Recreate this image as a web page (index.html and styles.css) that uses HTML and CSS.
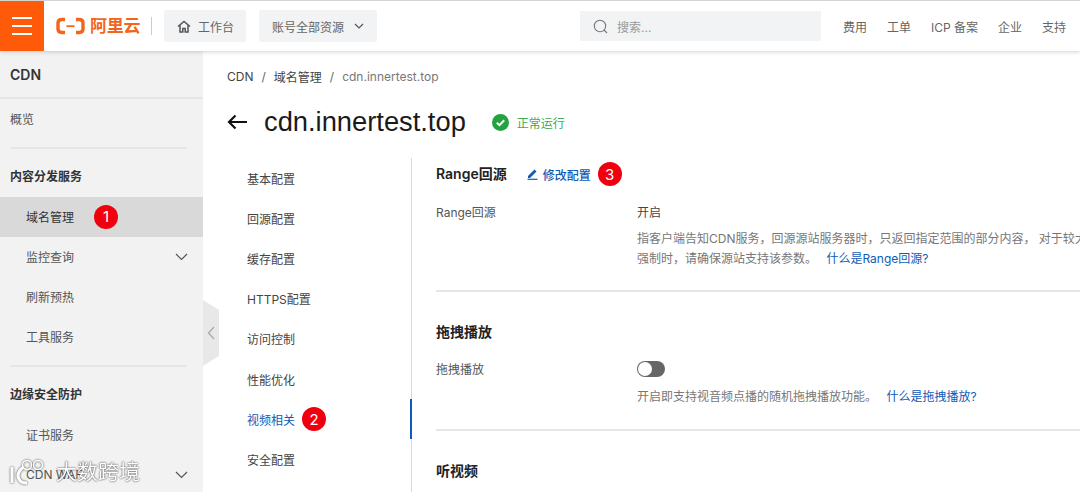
FILE: index.html
```html
<!DOCTYPE html>
<html lang="zh-CN">
<head>
<meta charset="utf-8">
<title>CDN</title>
<link rel="stylesheet" href="styles.css">
</head>
<body>
<div class="app">
  <header class="topbar">
    <button class="burger"><span></span><span></span><span></span></button>
    <div class="logo">
      <svg width="29" height="18" viewBox="0 0 29 18"><path d="M9 2.500H6Q2 2.500 2 6V12Q2 15.500 6 15.500H9M20 2.500H23Q27 2.500 27 6V12Q27 15.500 23 15.500H20" fill="none" stroke="#f4651c" stroke-width="3.400"/><path d="M10.500 9.200H18.500" stroke="#f4651c" stroke-width="1.800"/></svg>
      <span class="logo-text">阿里云</span>
    </div>
    <div class="logo-sep"></div>
    <div class="pill home-pill">
      <svg width="14" height="13" viewBox="0 0 14 13"><path d="M1 6.500L7 1.500L13 6.500M3 5.500V12H5.800V8.500H8.200V12H11V5.500" fill="none" stroke="#555" stroke-width="1.500"/></svg>
      <span>工作台</span>
    </div>
    <div class="pill res-pill">
      <span>账号全部资源</span>
      <svg width="10" height="6" viewBox="0 0 10 6"><path d="M1 1L5 5L9 1" fill="none" stroke="#555" stroke-width="1.200"/></svg>
    </div>
    <div class="search">
      <svg width="15" height="15" viewBox="0 0 15 15"><circle cx="7" cy="7" r="5.700" fill="none" stroke="#777" stroke-width="1.100"/><path d="M11 11L14 14" stroke="#777" stroke-width="1.100"/></svg>
      <span>搜索...</span>
    </div>
    <nav class="topnav">
      <a>费用</a><a>工单</a><a>ICP 备案</a><a>企业</a><a>支持</a>
    </nav>
  </header>

  <div class="body">
    <aside class="sidebar">
      <div class="side-title">CDN</div>
      <div class="side-item top">概览</div>
      <div class="side-rule"></div>
      <div class="side-group">内容分发服务</div>
      <div class="side-sub active">域名管理<i class="badge">1</i></div>
      <div class="side-sub">监控查询<svg class="caret" width="13" height="8" viewBox="0 0 13 8"><path d="M1 1L6.500 6.500L12 1" fill="none" stroke="#555" stroke-width="1.200"/></svg></div>
      <div class="side-sub">刷新预热</div>
      <div class="side-sub">工具服务</div>
      <div class="side-rule second"></div>
      <div class="side-group">边缘安全防护</div>
      <div class="side-sub">证书服务</div>
      <div class="side-sub">CDN WAF<svg class="caret" width="13" height="8" viewBox="0 0 13 8"><path d="M1 1L6.500 6.500L12 1" fill="none" stroke="#555" stroke-width="1.200"/></svg></div>
    </aside>
    <div class="collapse">
      <svg width="8" height="14" viewBox="0 0 8 14"><path d="M7 1L1.500 7L7 13" fill="none" stroke="#aaa" stroke-width="1.300"/></svg>
    </div>

    <main class="main">
      <div class="crumbs"><span>CDN</span><em>/</em><span>域名管理</span><em>/</em><span class="last">cdn.innertest.top</span></div>
      <div class="title-row">
        <svg class="back" width="20" height="16" viewBox="0 0 20 16"><path d="M20 8H2M8.500 1.500L2 8L8.500 14.500" fill="none" stroke="#111" stroke-width="2.200"/></svg>
        <h1>cdn.innertest.top</h1>
        <svg class="ok" width="17" height="17" viewBox="0 0 17 17"><circle cx="8.500" cy="8.500" r="8.500" fill="#23a33f"/><path d="M4.800 8.700L7.500 11.200L12.200 6.200" fill="none" stroke="#fff" stroke-width="2"/></svg>
        <span class="status">正常运行</span>
      </div>
      <div class="columns">
        <nav class="subnav">
          <a>基本配置</a><a>回源配置</a><a>缓存配置</a><a>HTTPS配置</a><a>访问控制</a><a>性能优化</a>
          <a class="current">视频相关<i class="badge">2</i></a>
          <a>安全配置</a>
        </nav>
        <section class="content">
          <div class="block first">
            <div class="block-head">
              <h2>Range回源</h2>
              <a class="edit"><svg width="11" height="12" viewBox="0 0 11 12"><path d="M1 8L7.500 1.500L9.500 3.500L3 10H1Z" fill="#0f5bb5"/><path d="M0.500 11.300H10.500" stroke="#0f5bb5" stroke-width="1.200"/></svg>修改配置</a>
              <i class="badge">3</i>
            </div>
            <div class="row">
              <div class="row-label">Range回源</div>
              <div class="row-value">
                <div>开启</div>
                <p class="desc">指客户端告知CDN服务，回源源站服务器时，只返回指定范围的部分内容， 对于较大文件的分发<br>强制时，请确保源站支持该参数。 <a>什么是Range回源?</a></p>
              </div>
            </div>
          </div>
          <div class="block second">
            <h2>拖拽播放</h2>
            <div class="row drag-row">
              <div class="row-label">拖拽播放</div>
              <div class="row-value">
                <span class="toggle"></span>
                <p class="desc single">开启即支持视音频点播的随机拖拽播放功能。 <a>什么是拖拽播放?</a></p>
              </div>
            </div>
          </div>
          <div class="block third"><h2>听视频</h2></div>
        </section>
      </div>
    </main>
  </div>

  <div class="watermark">
    <svg width="37" height="26" viewBox="0 0 37 26"><path d="M3 8V24M15 8C9 11 8 17 10 20C11 23 14 24 18 24" fill="none" stroke="#fff" stroke-width="3"/><circle cx="18" cy="6" r="4.500" fill="none" stroke="#fff" stroke-width="1.500"/><circle cx="29" cy="6" r="4.500" fill="none" stroke="#fff" stroke-width="1.500"/></svg>
    <span>大数跨境</span>
  </div>
</div>
</body>
</html>
```
FILE: styles.css
```css
* { box-sizing: border-box; }
html, body { margin: 0; padding: 0; }
body {
  width: 1080px;
  height: 492px;
  overflow: hidden;
  background: #fff;
  font-family: Inter, "Noto Sans CJK SC", sans-serif;
  font-size: 12px;
  color: #333;
}
a { color: inherit; text-decoration: none; }
.app { position: relative; width: 1080px; height: 492px; overflow: hidden; }

.topbar {
  position: relative;
  z-index: 3;
  height: 51px;
  display: flex;
  align-items: center;
  background: #fff;
  border-top: 1px solid #d4d4d4;
  box-shadow: 0 1px 4px rgba(0, 0, 0, .18);
}
.burger {
  width: 44px;
  height: 50px;
  flex: none;
  border: 0;
  padding: 0;
  background: #ff5a0a;
  display: flex;
  flex-direction: column;
  justify-content: center;
  align-items: center;
  gap: 6px;
}
.burger span { width: 20px; height: 2px; background: #fff; }
.logo { display: flex; align-items: center; gap: 5px; margin-left: 12px; width: 89px; flex: none; }
.logo-text { color: #f4651c; font-size: 17px; font-weight: 700; line-height: 20px; white-space: nowrap; letter-spacing: -.3px; }
.logo-sep { width: 1px; height: 18px; background: #ccc; margin-left: 6px; flex: none; }
.pill {
  height: 32px;
  flex: none;
  display: flex;
  align-items: center;
  background: #f1f3f4;
  border-radius: 2px;
  color: #666;
  font-size: 12px;
}
.home-pill { width: 82px; margin-left: 12px; padding-left: 13px; gap: 7px; }
.res-pill { width: 118px; margin-left: 13px; padding-left: 13px; gap: 10px; }
.search {
  width: 241px;
  height: 30px;
  flex: none;
  margin-left: 203px;
  display: flex;
  align-items: center;
  gap: 9px;
  padding-left: 13px;
  background: #f1f3f4;
  color: #999;
}
.topnav { display: flex; gap: 20px; margin-left: 22px; color: #666; white-space: nowrap; }

.body { display: flex; height: 441px; position: relative; }
.sidebar { width: 203px; height: 441px; flex: none; background: #f2f2f2; overflow: hidden; color: #555; }
.side-title {
  height: 48px;
  padding-left: 10px;
  line-height: 47px;
  font-size: 14px;
  font-weight: 600;
  color: #333;
  border-bottom: 2px solid #e6e6e6;
}
.side-item { height: 40px; line-height: 41px; padding-left: 10px; }
.side-rule { height: 2px; margin: 8px 10px 0 10px; background: #e6e6e6; width: 177px; }
.side-rule.second { margin-top: 8px; }
.side-group { height: 48px; line-height: 56px; padding-left: 10px; font-weight: 600; color: #333; }
.side-sub {
  height: 40px;
  display: flex;
  align-items: center;
  padding: 0 15px 1px 26px;
}
.side-sub.active { background: #d9d9d9; color: #333; }
.caret { margin-left: auto; }
.badge {
  display: inline-flex;
  align-items: center;
  justify-content: center;
  width: 24px;
  height: 24px;
  flex: none;
  border-radius: 50%;
  background: #f0000e;
  color: #fff;
  font-style: normal;
  font-size: 15px;
}
.side-sub .badge { margin-left: 20px; }
.collapse {
  position: absolute;
  left: 203px;
  top: 249px;
  width: 16px;
  height: 66px;
  background: #e8e8e8;
  clip-path: polygon(0 0, 100% 15%, 100% 85%, 0 100%);
  display: flex;
  align-items: center;
  justify-content: center;
}

.main { flex: 1; min-width: 0; padding-left: 24px; }
.crumbs { height: 48px; display: flex; align-items: center; gap: 8px; padding-top: 2px; color: #444; white-space: nowrap; }
.crumbs em { font-style: normal; color: #666; }
.crumbs .last { color: #777; }
.title-row { height: 46px; display: flex; align-items: center; }
.back { flex: none; }
h1 { margin: 0 0 0 17px; font-family: "Liberation Sans", sans-serif; font-size: 27.300px; line-height: 36px; font-weight: 400; color: #1a1a1a; white-space: nowrap; }
.ok { margin-left: 26px; flex: none; }
.status { margin-left: 8px; color: #3cab52; }
.columns { display: flex; margin-top: 13px; height: 334px; }
.subnav { width: 185px; flex: none; border-right: 1px solid #d9d9d9; display: flex; flex-direction: column; color: #444; }
.subnav a { height: 40.200px; display: flex; align-items: center; padding-left: 20px; position: relative; white-space: nowrap; }
.subnav .current { color: #0f5bb5; }
.subnav .current::after { content: ""; position: absolute; right: -1px; top: 0; width: 2px; height: 40px; background: #0f5bb5; }
.subnav .badge { margin-left: 7px; }
.content { flex: 1; min-width: 0; padding-left: 24px; overflow: hidden; }
h2 { margin: 0; font-size: 14px; line-height: 20px; font-weight: 600; color: #222; }
.block { border-bottom: 2px solid #e6e6e6; width: 700px; }
.block.first { height: 134px; padding-top: 4px; }
.block.second { height: 139px; padding-top: 30px; }
.block.third { border: 0; padding-top: 30px; }
.block-head { display: flex; align-items: center; }
.edit { display: flex; align-items: center; gap: 5px; margin-left: 20px; color: #0f5bb5; font-weight: 500; }
.block-head .badge { margin-left: 7px; }
.row { display: flex; margin-top: 17px; }
.drag-row { margin-top: 18px; }
.row-label { width: 201px; flex: none; color: #555; line-height: 20px; }
.row-value { flex: 1; line-height: 20px; color: #444; }
.desc { margin: 6px 0 0; color: #777; line-height: 20px; white-space: nowrap; }
.desc.single { margin-top: 10px; }
.desc a { color: #0f5bb5; margin-left: 6px; }
.toggle {
  display: block;
  position: relative;
  width: 28px;
  height: 16px;
  margin-top: 1px;
  border-radius: 8px;
  background: #666;
}
.toggle::after { content: ""; position: absolute; left: 1px; top: 1px; width: 14px; height: 14px; border-radius: 50%; background: #fff; }

.watermark {
  position: absolute;
  left: 9px;
  top: 458px;
  z-index: 4;
  display: flex;
  align-items: center;
  gap: 10px;
  color: #fff;
  font-size: 21px;
  line-height: 28px;
  opacity: .9;
  white-space: nowrap;
  text-shadow: 0 0 2px rgba(0, 0, 0, .8), 0 0 1px rgba(0, 0, 0, .5);
}
.watermark svg { filter: drop-shadow(0 0 1px rgba(0, 0, 0, .8)); }
```
